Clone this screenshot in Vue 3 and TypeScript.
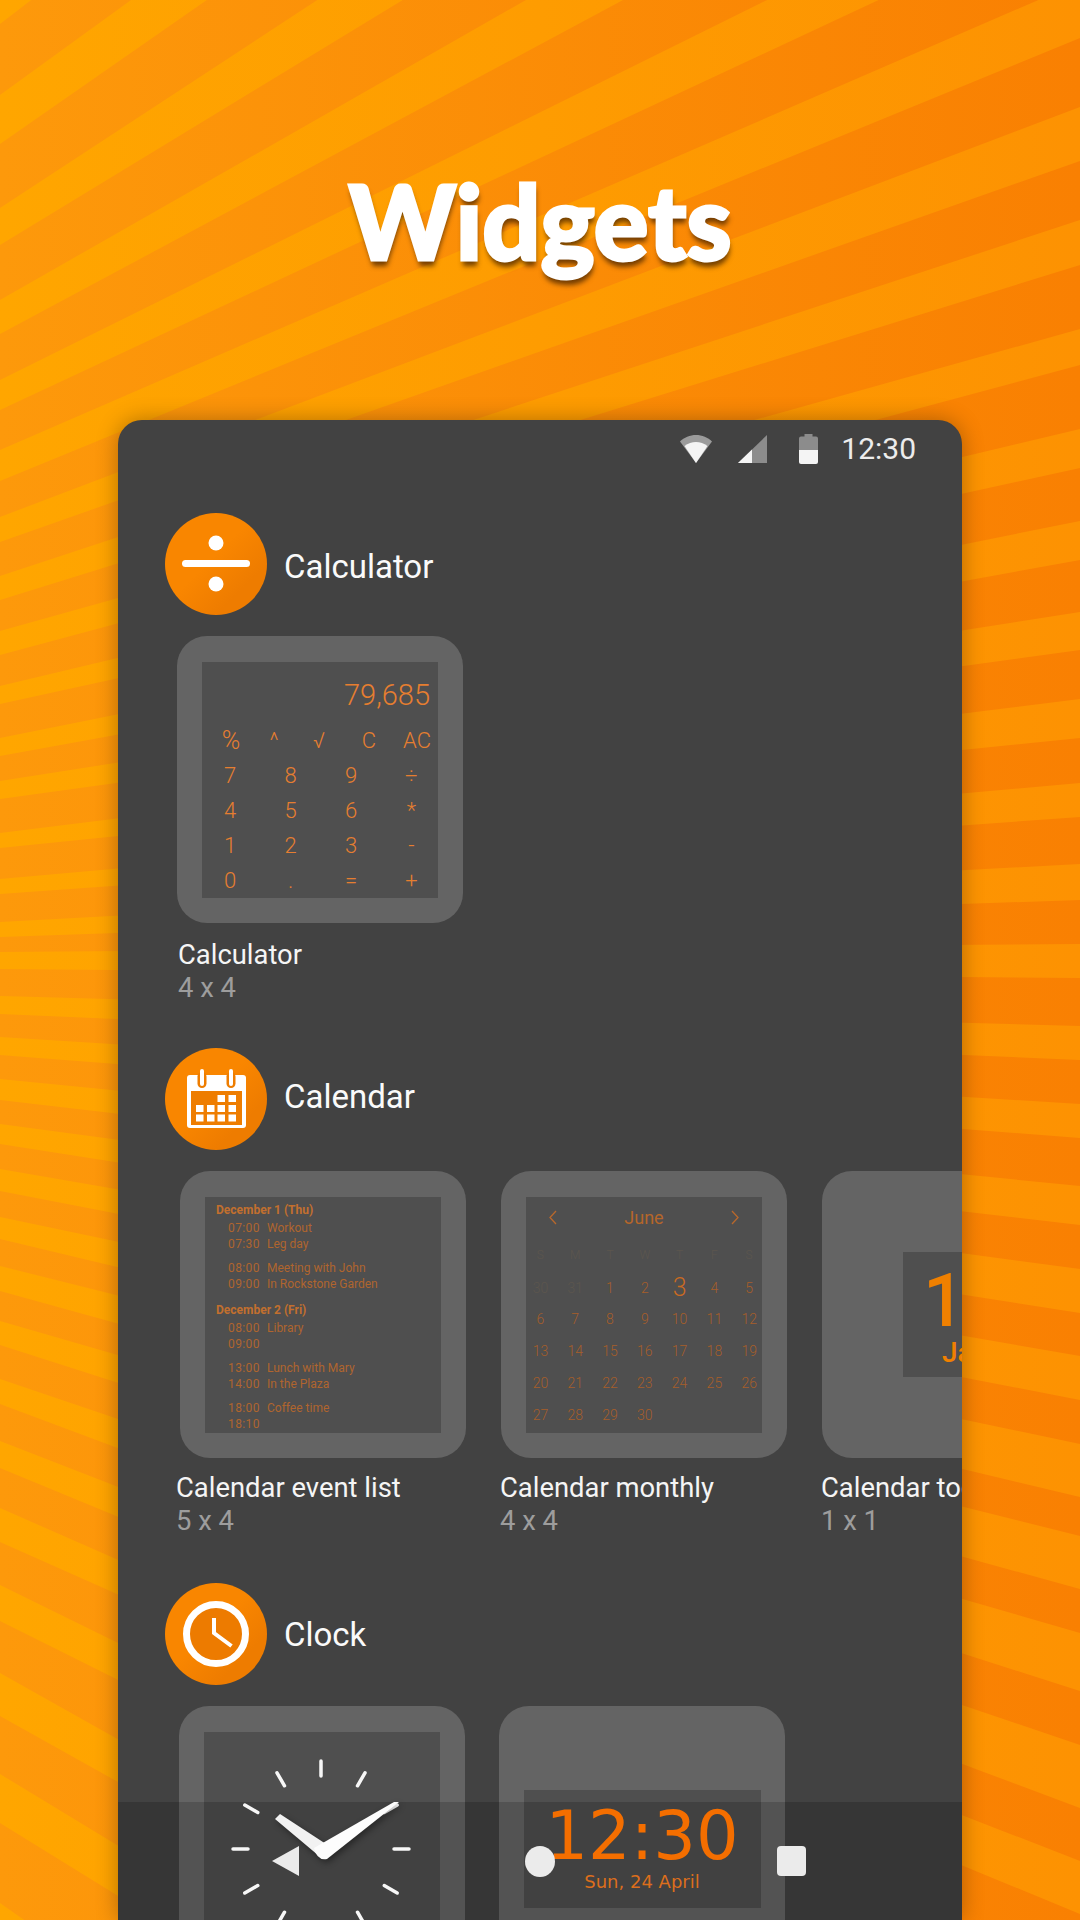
<script setup lang="ts">
// bright stripes: where each one crosses the left edge and the right edge of the page
const stripeEdges: [number, number, number, number][] = [
  [0, 24, -830, -808], [95, 144, -688, -608], [208, 245, -500, -412], [300, 334, -316, -245],
  [380, 410, -155, -94], [450, 481, -18, 38], [517, 542, 107, 161], [576, 600, 220, 265],
  [631, 655, 329, 365], [686, 704, 429, 468], [738, 756, 521, 560], [781, 799, 612, 650],
  [833, 848, 699, 738], [879, 894, 783, 817], [922, 937, 864, 900], [952, 969, 944, 978],
  [996, 1014, 1026, 1060], [1037, 1055, 1104, 1138], [1079, 1100, 1186, 1225], [1124, 1144, 1269, 1313],
  [1169, 1191, 1356, 1400], [1217, 1239, 1444, 1497], [1266, 1291, 1536, 1589], [1321, 1345, 1633, 1691],
  [1379, 1404, 1745, 1808], [1441, 1468, 1861, 1914], [1508, 1542, 1983, 2022], [1585, 1621, 2115, 2160],
  [1673, 1716, 2280, 2320], [1774, 1823, 2430, 2490], [1903, 1950, 2660, 2720]
]
const stripes = stripeEdges.map(([a, b, c, d]) => `0,${a} 1080,${c} 1080,${d} 0,${b}`)

const calcTop = ['%', '^', '√', 'C', 'AC']
const calcKeys = ['7', '8', '9', '÷', '4', '5', '6', '*', '1', '2', '3', '-', '0', '.', '=', '+']

const agenda = [
  {
    day: 'December 1 (Thu)',
    groups: [
      [['07:00', 'Workout'], ['07:30', 'Leg day']],
      [['08:00', 'Meeting with John'], ['09:00', 'In Rockstone Garden']]
    ]
  },
  {
    day: 'December 2 (Fri)',
    groups: [
      [['08:00', 'Library'], ['09:00', '']],
      [['13:00', 'Lunch with Mary'], ['14:00', 'In the Plaza']],
      [['18:00', 'Coffee time'], ['18:10', '']]
    ]
  }
]

const weekdays = ['S', 'M', 'T', 'W', 'T', 'F', 'S']
const days = [
  '30', '31', '1', '2', '3', '4', '5',
  '6', '7', '8', '9', '10', '11', '12',
  '13', '14', '15', '16', '17', '18', '19',
  '20', '21', '22', '23', '24', '25', '26',
  '27', '28', '29', '30'
]

// tick marks of the analog clock
const ticks = Array.from({ length: 12 }, (_, i) => {
  const a = (i * Math.PI) / 6
  return {
    x1: 117 + Math.sin(a) * 73,
    y1: 117 - Math.cos(a) * 73,
    x2: 117 + Math.sin(a) * 88,
    y2: 117 - Math.cos(a) * 88
  }
})
</script>

<template>
  <div class="page">
    <svg class="stripes" width="1080" height="1920" viewBox="0 0 1080 1920">
      <defs>
        <linearGradient id="base" gradientUnits="userSpaceOnUse" x1="0" y1="0" x2="1080" y2="0">
          <stop offset="0" stop-color="#fd990b" />
          <stop offset="1" stop-color="#f98002" />
        </linearGradient>
        <linearGradient id="band" gradientUnits="userSpaceOnUse" x1="0" y1="0" x2="1080" y2="0">
          <stop offset="0" stop-color="#ffa600" />
          <stop offset="1" stop-color="#fd9202" />
        </linearGradient>
      </defs>
      <rect width="1080" height="1920" fill="url(#base)" />
      <polygon v-for="(s, i) in stripes" :key="i" :points="s" fill="url(#band)" />
    </svg>

    <header class="hero">
      <h1>Widgets</h1>
    </header>

    <main class="phone">
      <div class="status">
        <svg class="st-wifi" width="32" height="28" viewBox="0 0 32 28">
          <path d="M16 28 0 6.500C4 2.500 10 0 16 0s12 2.500 16 6.500z" fill="#9b9b9b" />
          <path d="M16 28 4.500 11C8 8.500 12 7 16 7s8 1.500 11.500 4z" fill="#f4f4f4" />
        </svg>
        <svg class="st-signal" width="29" height="28" viewBox="0 0 29 28">
          <path d="M0 28 29 0v28z" fill="#8c8c8c" />
          <path d="M0 28 14 14.500V28z" fill="#f4f4f4" />
        </svg>
        <svg class="st-battery" width="19" height="30" viewBox="0 0 19 30">
          <path d="M5.500 0h8v2.500H17a2 2 0 0 1 2 2V16H0V4.500a2 2 0 0 1 2-2h3.500z" fill="#8c8c8c" />
          <path d="M0 16h19v12a2 2 0 0 1-2 2H2a2 2 0 0 1-2-2z" fill="#f4f4f4" />
        </svg>
        <span class="time">12:30</span>
      </div>

      <!-- Calculator -->
      <section class="section sec-calc">
        <div class="sec-head">
          <div class="badge">
            <svg width="102" height="102" viewBox="0 0 102 102">
              <rect x="17" y="47" width="68" height="7" rx="3.500" fill="#fff" />
              <circle cx="51" cy="30" r="7.500" fill="#fff" />
              <circle cx="51" cy="71" r="7.500" fill="#fff" />
            </svg>
          </div>
          <span class="sec-title">Calculator</span>
        </div>
        <div class="list">
          <article class="item">
            <div class="card">
              <div class="inner calc">
                <div class="calc-display">79,685</div>
                <div class="calc-top">
                  <span v-for="k in calcTop" :key="k" :class="{ pct: k === '%' }">{{ k }}</span>
                </div>
                <div class="calc-keys">
                  <span v-for="k in calcKeys" :key="k">{{ k }}</span>
                </div>
              </div>
            </div>
            <div class="name">Calculator</div>
            <div class="size">4 x 4</div>
          </article>
        </div>
      </section>

      <!-- Calendar -->
      <section class="section sec-cal">
        <div class="sec-head">
          <div class="badge">
            <svg width="102" height="102" viewBox="0 0 102 102">
              <rect x="22" y="27" width="59" height="53" rx="3" fill="#fff" />
              <rect x="26" y="43" width="51" height="34" fill="#ee7d00" />
              <g v-for="x in [32.5, 61.5]" :key="x">
                <rect :x="x" y="24" width="9" height="16" rx="4.500" fill="#ee7d00" />
                <rect :x="x + 2.5" y="21" width="4" height="17" rx="2" fill="#fff" />
              </g>
              <g fill="#fff">
                <rect x="52.500" y="47" width="7.500" height="7" />
                <rect x="63.500" y="47" width="7.500" height="7" />
                <rect v-for="x in [31, 42, 52.5, 63.5]" :key="'a' + x" :x="x" y="57" width="7.500" height="7" />
                <rect v-for="x in [31, 42, 52.5, 63.5]" :key="'b' + x" :x="x" y="66.500" width="7.500" height="7" />
              </g>
            </svg>
          </div>
          <span class="sec-title">Calendar</span>
        </div>
        <div class="list">
          <article class="item">
            <div class="card">
              <div class="inner agenda">
                <div v-for="d in agenda" :key="d.day" class="agenda-day">
                  <div class="agenda-head">{{ d.day }}</div>
                  <div v-for="(g, gi) in d.groups" :key="gi" class="agenda-group">
                    <div v-for="row in g" :key="row[0]" class="agenda-row">
                      <span class="agenda-time">{{ row[0] }}</span>
                      <span>{{ row[1] }}</span>
                    </div>
                  </div>
                </div>
              </div>
            </div>
            <div class="name">Calendar event list</div>
            <div class="size">5 x 4</div>
          </article>

          <article class="item">
            <div class="card">
              <div class="inner month">
                <div class="month-head">
                  <svg width="8" height="15" viewBox="0 0 8 15"><path d="M7 1 1 7.500 7 14" fill="none" stroke="#b8682c" stroke-width="1.300" /></svg>
                  <span>June</span>
                  <svg width="8" height="15" viewBox="0 0 8 15"><path d="M1 1 7 7.500 1 14" fill="none" stroke="#b8682c" stroke-width="1.300" /></svg>
                </div>
                <div class="month-week">
                  <span v-for="(w, i) in weekdays" :key="i">{{ w }}</span>
                </div>
                <div class="month-grid">
                  <span
                    v-for="(d, i) in days"
                    :key="i"
                    :class="{ faint: i < 2, today: i === 4 }"
                  >{{ d }}</span>
                </div>
              </div>
            </div>
            <div class="name">Calendar monthly</div>
            <div class="size">4 x 4</div>
          </article>

          <article class="item">
            <div class="card card-today">
              <div class="inner today-box">
                <div class="today-num">12</div>
                <div class="today-month">Jan</div>
              </div>
            </div>
            <div class="name">Calendar today</div>
            <div class="size">1 x 1</div>
          </article>
        </div>
      </section>

      <!-- Clock -->
      <section class="section sec-clock">
        <div class="sec-head">
          <div class="badge">
            <svg width="102" height="102" viewBox="0 0 102 102">
              <circle cx="51" cy="51" r="29.500" fill="#ed7b00" stroke="#fff" stroke-width="7" />
              <path d="M49 35v15l17.500 13" fill="none" stroke="#fff" stroke-width="4" />
            </svg>
          </div>
          <span class="sec-title">Clock</span>
        </div>
        <div class="list">
          <article class="item">
            <div class="card">
              <div class="inner analog">
                <svg width="234" height="235" viewBox="0 0 234 235">
                  <line
                    v-for="(t, i) in ticks"
                    :key="i"
                    :x1="t.x1" :y1="t.y1" :x2="t.x2" :y2="t.y2"
                    stroke="#f7f7f7" stroke-width="3.500" stroke-linecap="round"
                  />
                  <g class="hands">
                    <path d="M71 87 76 82 122 112 123 124 115 124z" fill="#f2f2f2" />
                    <path d="M110 116 190 70 195 70 123 127Q113 129 110 116z" fill="#fdfdfd" />
                  </g>
                </svg>
              </div>
            </div>
          </article>
          <article class="item">
            <div class="card card-digital">
              <div class="inner digital">
                <div class="dig-time">12:30</div>
                <div class="dig-date">Sun, 24 April</div>
              </div>
            </div>
          </article>
        </div>
      </section>

      <nav class="navbar">
        <svg width="27" height="30" viewBox="0 0 27 30"><path d="M27 0v30L0 15z" fill="#ebebeb" /></svg>
        <span class="nav-home"></span>
        <span class="nav-recent"></span>
      </nav>
    </main>
  </div>
</template>

<style>
html,
body {
  margin: 0;
  background: #f90;
}
</style>

<style scoped>
.page {
  position: relative;
  width: 1080px;
  height: 1920px;
  overflow: hidden;
  font-family: Roboto, "Liberation Sans", sans-serif;
}

.stripes {
  position: absolute;
  left: 0;
  top: 0;
}

.hero {
  position: relative;
  height: 420px;
  display: flex;
  justify-content: center;
}

.hero h1 {
  margin: 161px 0 0;
  font-family: Lato, sans-serif;
  font-weight: 900;
  font-size: 102px;
  line-height: 120px;
  color: #fff;
  -webkit-text-stroke: 3px #fff;
  text-shadow: 1px 6px 5px rgba(70, 35, 0, 0.75);
}

.phone {
  position: relative;
  width: 844px;
  height: 1500px;
  margin: 0 auto;
  background: #424242;
  border-radius: 24px 24px 0 0;
  overflow: hidden;
  box-shadow: 0 0 22px rgba(0, 0, 0, 0.3);
}

.status {
  height: 57px;
  display: flex;
  align-items: center;
  padding-right: 46px;
  justify-content: flex-end;
}

.st-signal {
  margin-left: 26px;
}

.st-battery {
  margin-left: 32px;
}

.time {
  margin-left: 23px;
  font-size: 30px;
  color: #ececec;
}

.section {
  padding-left: 47px;
  height: 535px;
}

.sec-calc {
  margin-top: 36px;
}

.sec-head {
  display: flex;
  align-items: center;
  gap: 17px;
  height: 102px;
  margin-bottom: 21px;
}

.badge {
  width: 102px;
  height: 102px;
  border-radius: 50%;
  background: linear-gradient(135deg, #f98600 45%, #ee7c00 75%);
}

.badge svg {
  display: block;
}

.sec-title {
  font-size: 33px;
  color: #fafafa;
}

.sec-calc .sec-title {
  padding-top: 5px;
}

.sec-cal .sec-title {
  padding-bottom: 5px;
}

.list {
  display: flex;
  gap: 35px;
  padding-left: 12px;
}

.item {
  flex: none;
}

.card {
  width: 286px;
  height: 287px;
  box-sizing: border-box;
  background: #646464;
  border-radius: 30px;
  display: flex;
  align-items: center;
  justify-content: center;
}

.inner {
  width: 236px;
  height: 236px;
  background: #4f4f4f;
  box-sizing: border-box;
  color: #b9692c;
  flex: none;
}

.name {
  margin-top: 14px;
  margin-left: -1px;
  font-size: 27.400px;
  line-height: 33px;
  color: #f5f5f5;
  white-space: nowrap;
}

.size {
  margin-left: -1px;
  font-size: 27.400px;
  line-height: 33px;
  color: #9d9d9d;
}

.sec-calc .name {
  margin-top: 16px;
}

.sec-calc .name,
.sec-calc .size {
  padding-left: 2px;
}

.sec-cal .card {
  margin-left: 3px;
}

.sec-cal .item + .item .card {
  margin-left: 0;
}

.sec-clock .list {
  padding-left: 14px;
  gap: 34px;
}

/* calculator widget */
.calc {
  color: #e67e30;
  font-weight: 300;
  padding-top: 16px;
}

.calc-display {
  font-size: 29px;
  line-height: 34px;
  text-align: right;
  padding-right: 8px;
}

.calc-top {
  display: grid;
  grid-template-columns: 48px 38px 52px 48px 48px;
  margin: 11px 0 0 5px;
  font-size: 22px;
  line-height: 36px;
  text-align: center;
}

.pct {
  font-size: 25px;
}

.calc-keys {
  display: grid;
  grid-template-columns: repeat(4, 60.400px);
  grid-auto-rows: 35.300px;
  margin-left: -2px;
  margin-top: -1px;
  font-size: 22px;
  line-height: 35px;
  text-align: center;
}

/* agenda widget */
.agenda {
  padding: 5px 0 0 11px;
  font-size: 12px;
  line-height: 16px;
  color: #b0652e;
  white-space: nowrap;
  overflow: hidden;
}

.agenda-day + .agenda-day {
  margin-top: 10px;
}

.agenda-head {
  font-weight: 700;
  font-size: 12px;
  color: #c26f2e;
  margin-bottom: -6px;
}

.agenda-group {
  margin-top: 8px;
}

.agenda-row {
  display: flex;
  padding-left: 12px;
}

.agenda-time {
  width: 39px;
  letter-spacing: 0.4px;
}

/* month widget */
.month {
  padding-top: 10px;
  color: #a65e2a;
  font-size: 14px;
  font-weight: 300;
}

.month-head {
  display: flex;
  justify-content: space-between;
  align-items: center;
  height: 22px;
  padding: 0 23px;
  font-size: 18px;
  font-weight: 400;
  color: #b5662a;
}

.month-week {
  display: grid;
  grid-template-columns: repeat(7, 34.800px);
  margin: 17px 0 0 -3px;
  font-size: 12px;
  line-height: 18px;
  text-align: center;
  color: #5c564e;
}

.month-grid {
  display: grid;
  grid-template-columns: repeat(7, 34.800px);
  grid-auto-rows: 31.800px;
  margin: 8px 0 0 -3px;
  line-height: 32px;
  text-align: center;
}

.faint {
  color: #5c564e;
}

.today {
  font-size: 25px;
  color: #c96a22;
}

/* today widget */
.today-box {
  width: 125px;
  height: 125px;
  color: #f08000;
  text-align: center;
}

.today-num {
  font-size: 74px;
  font-weight: 500;
  line-height: 74px;
  margin-top: 12px;
}

.today-month {
  font-size: 28px;
  font-weight: 500;
  line-height: 30px;
}

/* clock widgets */
.analog svg {
  display: block;
  position: relative;
  z-index: 2;
}

.hands {
  filter: drop-shadow(2px 3px 3px rgba(0, 0, 0, 0.4));
}

.card-digital {
  align-items: flex-start;
  padding-top: 84px;
}

.digital {
  width: 237px;
  height: 118px;
  display: flex;
  flex-direction: column;
  align-items: center;
  font-family: "DejaVu Sans", sans-serif;
}

.dig-time {
  position: relative;
  z-index: 2;
  font-size: 67px;
  line-height: 66px;
  margin-top: 13px;
  color: #f46e00;
}

.dig-date {
  position: relative;
  z-index: 2;
  font-size: 18px;
  line-height: 26px;
  color: #dc6e1c;
}

/* navigation bar over the list */
.navbar {
  position: absolute;
  left: 0;
  right: 0;
  bottom: 0;
  height: 118px;
  box-sizing: border-box;
  padding: 0 156px 0 154px;
  display: flex;
  align-items: center;
  justify-content: space-between;
  background: rgba(0, 0, 0, 0.17);
}

.navbar > * {
  position: relative;
  z-index: 3;
}

.nav-home {
  width: 30px;
  height: 31px;
  margin-left: 4px;
  border-radius: 50%;
  background: #ebebeb;
}

.nav-recent {
  width: 29px;
  height: 30px;
  border-radius: 4px;
  background: #ebebeb;
}
</style>
